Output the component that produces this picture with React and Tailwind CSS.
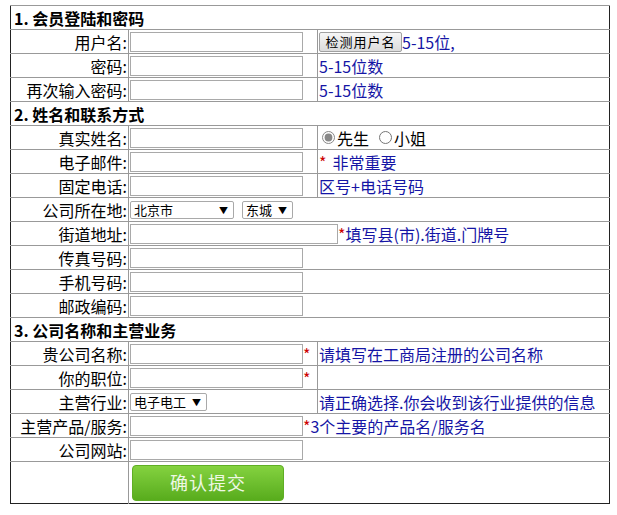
import { useState } from 'react';

const font = "font-['SimSun','Noto_Sans_CJK_SC',sans-serif]";

function TextInput({ w = 'w-[173px]' }) {
  return (
    <input
      type="text"
      className={`${w} h-[20px] shrink-0 border border-[#a9a9a9] bg-white px-1 text-[13px] outline-none`}
    />
  );
}

function FakeSelect({ value, w }) {
  return (
    <span className={`relative flex shrink-0 items-center ${w} h-[18px] border border-[#a9a9a9] bg-white rounded-[2px]`}>
      <span className="pl-[3px] text-[13px] leading-none text-black">{value}</span>
      <span className="absolute right-[5px] top-[4px] text-[9px] leading-none text-black">▼</span>
    </span>
  );
}

// one table cell, content kept on one 23px line
function Cell({ children, span, left, className = '' }) {
  return (
    <td colSpan={span} className={`p-0 border-t border-[#999] ${left ? 'border-l' : ''}`}>
      <div className={`flex items-center h-[23px] whitespace-nowrap text-[16px] leading-none ${className}`}>
        {children}
      </div>
    </td>
  );
}

function Label({ children }) {
  return (
    <td className="p-0 border-t border-r border-[#999]">
      <div className="flex items-center justify-end h-[23px] pr-[1px] text-[16px] leading-none text-black whitespace-nowrap">
        {children}
      </div>
    </td>
  );
}

function Section({ children }) {
  return (
    <tr>
      <Cell span={3} className="pl-[3px] font-bold text-black">{children}</Cell>
    </tr>
  );
}

const Star = () => <span className="text-[#cc0000]">*</span>;

export default function App() {
  const [gender, setGender] = useState('m');

  return (
    <div className={`w-[617px] h-[515px] bg-white pt-[5px] pl-[10px] ${font}`}>
      <table className="w-[600px] border-collapse border border-[#222] table-fixed">
        <colgroup>
          <col className="w-[118px]" />
          <col className="w-[189px]" />
          <col />
        </colgroup>
        <tbody>
          <Section>1. 会员登陆和密码</Section>
          <tr>
            <Label>用户名:</Label>
            <Cell className="pl-[1px]"><TextInput /></Cell>
            <Cell left className="pl-[1px] text-[#1515a5]">
              <button className="h-[20px] w-[83px] border border-[#a0a0a0] rounded-[2px] bg-gradient-to-b from-[#f6f6f6] to-[#dcdcdc] text-[13px] tracking-[1px] text-black">
                检测用户名
              </button>
              <span>5-15位,</span>
            </Cell>
          </tr>
          <tr>
            <Label>密码:</Label>
            <Cell className="pl-[1px]"><TextInput /></Cell>
            <Cell left className="pl-[1px] text-[#1515a5]">5-15位数</Cell>
          </tr>
          <tr>
            <Label>再次输入密码:</Label>
            <Cell className="pl-[1px]"><TextInput /></Cell>
            <Cell left className="pl-[1px] text-[#1515a5]">5-15位数</Cell>
          </tr>

          <Section>2. 姓名和联系方式</Section>
          <tr>
            <Label>真实姓名:</Label>
            <Cell className="pl-[1px]"><TextInput /></Cell>
            <Cell left className="pl-[4px] text-black">
              <label className="flex items-center">
                <input type="radio" name="g" checked={gender === 'm'} onChange={() => setGender('m')} className="w-[13px] h-[13px] m-0 mr-[2px] accent-[#888]" />
                先生
              </label>
              <label className="flex items-center ml-[10px]">
                <input type="radio" name="g" checked={gender === 'f'} onChange={() => setGender('f')} className="w-[13px] h-[13px] m-0 mr-[2px] accent-[#888]" />
                小姐
              </label>
            </Cell>
          </tr>
          <tr>
            <Label>电子邮件:</Label>
            <Cell className="pl-[1px]"><TextInput /></Cell>
            <Cell left className="pl-[1px] text-[#1515a5]">
              <Star /><span className="ml-[6px]">非常重要</span>
            </Cell>
          </tr>
          <tr>
            <Label>固定电话:</Label>
            <Cell className="pl-[1px]"><TextInput /></Cell>
            <Cell left className="pl-[1px] text-[#1515a5]">区号+电话号码</Cell>
          </tr>
          <tr>
            <Label>公司所在地:</Label>
            <Cell span={2} className="pl-[1px] gap-[8px]">
              <FakeSelect value="北京市" w="w-[104px]" />
              <FakeSelect value="东城" w="w-[51px]" />
            </Cell>
          </tr>
          <tr>
            <Label>街道地址:</Label>
            <Cell span={2} className="pl-[1px] text-[#1515a5]">
              <TextInput w="w-[208px]" />
              <Star />
              <span>填写县(市).街道.门牌号</span>
            </Cell>
          </tr>
          <tr>
            <Label>传真号码:</Label>
            <Cell span={2} className="pl-[1px]"><TextInput /></Cell>
          </tr>
          <tr>
            <Label>手机号码:</Label>
            <Cell span={2} className="pl-[1px]"><TextInput /></Cell>
          </tr>
          <tr>
            <Label>邮政编码:</Label>
            <Cell span={2} className="pl-[1px]"><TextInput /></Cell>
          </tr>

          <Section>3. 公司名称和主营业务</Section>
          <tr>
            <Label>贵公司名称:</Label>
            <Cell className="pl-[1px]"><TextInput /><Star /></Cell>
            <Cell left className="pl-[1px] text-[#1515a5]">请填写在工商局注册的公司名称</Cell>
          </tr>
          <tr>
            <Label>你的职位:</Label>
            <Cell className="pl-[1px]"><TextInput /><Star /></Cell>
            <Cell left />
          </tr>
          <tr>
            <Label>主营行业:</Label>
            <Cell className="pl-[1px]">
              <FakeSelect value="电子电工" w="w-[77px]" />
            </Cell>
            <Cell left className="pl-[1px] text-[#1515a5]">请正确选择.你会收到该行业提供的信息</Cell>
          </tr>
          <tr>
            <Label>主营产品/服务:</Label>
            <Cell span={2} className="pl-[1px] text-[#1515a5]">
              <TextInput /><Star />
              <span>3个主要的产品名/服务名</span>
            </Cell>
          </tr>
          <tr>
            <Label>公司网站:</Label>
            <Cell span={2} className="pl-[1px]"><TextInput /></Cell>
          </tr>
          <tr>
            <td className="p-0 border-t border-r border-[#999]" />
            <td colSpan={2} className="p-0 border-t border-[#999]">
              <div className="flex items-center h-[41px] pl-[3px]">
                <button className="w-[152px] h-[36px] rounded-[4px] border border-[#5fae24] bg-gradient-to-b from-[#84d23f] to-[#58ac1c] text-[18px] text-[#eef8e4] tracking-[1px]">
                  确认提交
                </button>
              </div>
            </td>
          </tr>
        </tbody>
      </table>
    </div>
  );
}
